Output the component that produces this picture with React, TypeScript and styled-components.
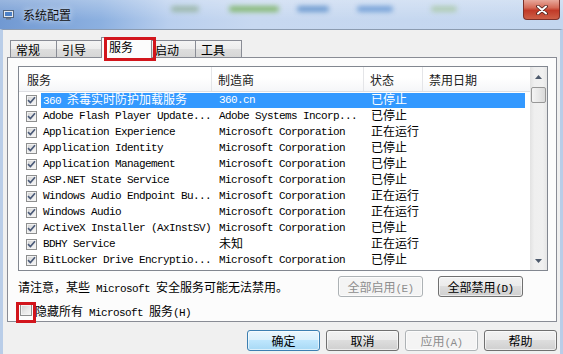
import React from 'react'
import styled, { createGlobalStyle } from 'styled-components'

const MONO = `"Liberation Mono", "Noto Sans CJK SC", monospace`
const HAN = `"Noto Sans CJK SC", "Noto Sans", sans-serif`

const GlobalStyle = createGlobalStyle`
  html, body {
    margin: 0;
    padding: 0;
    background: #f0f0f0;
  }
  body {
    width: 563px;
    height: 354px;
    overflow: hidden;
    font-family: ${HAN};
  }
`

const Window = styled.div`
  width: 563px;
  height: 354px;
  display: flex;
  flex-direction: column;
  overflow: hidden;
`

const TitleBar = styled.div`
  height: 29px;
  flex: none;
  display: flex;
  align-items: center;
  padding-left: 3px;
  box-sizing: border-box;
  background:
    linear-gradient(180deg, rgba(255, 255, 255, 0.28) 0%, rgba(255, 255, 255, 0) 70%),
    linear-gradient(90deg, #7199d2 0%, #8cb0e0 18%, #b9cfee 30%, #c7d8f0 45%, #c3d6ef 100%);
`

const TitleIcon = styled.svg`
  flex: none;
  margin-right: 9px;
`

const TitleText = styled.span`
  font: 12px ${HAN};
  color: #111;
  text-shadow: 0 0 6px rgba(255, 255, 255, 0.9);
`

const Blobs = styled.div`
  display: flex;
  align-self: flex-start;
  margin-top: 6px;
  margin-left: 100px;
`

const Blob = styled.span<{ $w: number; $color: string; $ml: number }>`
  width: ${(p) => p.$w}px;
  height: 6px;
  margin-left: ${(p) => p.$ml}px;
  border-radius: 3px;
  background: ${(p) => p.$color};
  filter: blur(2.5px);
  opacity: 0.75;
`

const CloseButton = styled.div`
  margin-left: auto;
  margin-right: 3px;
  align-self: flex-start;
  width: 37px;
  height: 20px;
  box-sizing: border-box;
  display: flex;
  align-items: center;
  justify-content: center;
  border: 1px solid #7d3029;
  border-top: none;
  border-radius: 0 0 4px 4px;
  background: linear-gradient(180deg, #e8a89b 0%, #d56b58 40%, #c13a28 55%, #cd5f47 100%);
`

const Body = styled.div`
  flex: 1;
  display: flex;
  flex-direction: column;
  background: #f0f0f0;
  border-top: 1px solid #8b9bb0;
  border-left: 3px solid #b9cde8;
  border-right: 3px solid #b9cde8;
`

const TabStrip = styled.div`
  display: flex;
  align-items: flex-end;
  height: 20px;
  padding: 8px 0 0 7px;
  margin-bottom: -1px;
  position: relative;
  z-index: 1;
`

const Tab = styled.div<{ $active?: boolean }>`
  position: relative;
  box-sizing: border-box;
  width: ${(p) => (p.$active ? 51 : 47)}px;
  height: ${(p) => (p.$active ? 21 : 18)}px;
  margin: 0 ${(p) => (p.$active ? -2 : 0)}px 0 ${(p) => (p.$active ? -2 : -1)}px;
  padding-left: ${(p) => (p.$active ? 7 : 5)}px;
  z-index: ${(p) => (p.$active ? 2 : 0)};
  border: 1px solid #898c95;
  border-bottom: ${(p) => (p.$active ? 'none' : '1px solid #898c95')};
  background: ${(p) =>
    p.$active ? '#fcfcfc' : 'linear-gradient(180deg, #f4f4f4 0%, #ececec 50%, #dedede 51%, #d6d6d6 100%)'};
  font: 12px/17px ${HAN};
  color: #000;
  &:first-child {
    margin-left: 0;
  }
`

const RedMark = styled.span<{ $t: number; $l: number; $r: number; $b: number }>`
  position: absolute;
  top: ${(p) => p.$t}px;
  left: ${(p) => p.$l}px;
  right: ${(p) => p.$r}px;
  bottom: ${(p) => p.$b}px;
  border: 3px solid #d2151c;
  pointer-events: none;
  z-index: 3;
`

const Panel = styled.div`
  height: 265px;
  margin: 0 3px 0 4px;
  box-sizing: border-box;
  border: 1px solid #898c95;
  background: #fcfcfc;
  padding: 8px 8px 0 10px;
  display: flex;
  flex-direction: column;
`

const List = styled.div`
  height: 205px;
  flex: none;
  box-sizing: border-box;
  border: 1px solid #828790;
  background: #fff;
  display: flex;
  overflow: hidden;
`

const ListMain = styled.div`
  flex: 1;
  display: flex;
  flex-direction: column;
  overflow: hidden;
`

const HeaderRow = styled.div`
  display: flex;
  height: 25px;
  flex: none;
  box-sizing: border-box;
  border-bottom: 1px solid #dedfe3;
  background: linear-gradient(180deg, #ffffff 0%, #ffffff 45%, #f5f6f8 100%);
`

const HeaderCell = styled.div<{ $w: number; $pl: number }>`
  width: ${(p) => p.$w}px;
  flex: none;
  box-sizing: border-box;
  padding-left: ${(p) => p.$pl}px;
  border-right: 1px solid #e4e5e8;
  font: 12px/25px ${HAN};
  color: #1a1a1a;
  &:last-child {
    border-right: none;
  }
`

const Row = styled.div`
  display: flex;
  height: 16px;
  flex: none;
  align-items: center;
  font: 11px/16px ${MONO};
  letter-spacing: -0.6px;
  color: #000;
  white-space: nowrap;
`

const CheckCell = styled.div`
  width: 22px;
  flex: none;
  display: flex;
  padding-left: 7px;
  box-sizing: border-box;
`

const RowBody = styled.div<{ $selected?: boolean }>`
  display: flex;
  width: 484px;
  height: 15px;
  align-items: center;
  background: ${(p) => (p.$selected ? '#3399ff' : 'transparent')};
  color: ${(p) => (p.$selected ? '#fff' : '#000')};
`

const Cell = styled.div<{ $w: number; $pl: number }>`
  width: ${(p) => p.$w}px;
  flex: none;
  box-sizing: border-box;
  padding-left: ${(p) => p.$pl}px;
  overflow: hidden;
`

const Han = styled.span`
  font-family: ${HAN};
  font-size: 12px;
  letter-spacing: 0;
`

const CheckBox = styled.span<{ $size?: number }>`
  width: ${(p) => p.$size ?? 12}px;
  height: ${(p) => p.$size ?? 12}px;
  flex: none;
  box-sizing: border-box;
  display: inline-flex;
  align-items: center;
  justify-content: center;
  border: 1px solid #8e8f8f;
  background: linear-gradient(135deg, #cfcfcf 0%, #e9e9e9 55%, #f7f7f7 100%);
  box-shadow: inset 0 0 0 1px #f2f2f2;
`

const ScrollBar = styled.div`
  width: 17px;
  flex: none;
  display: flex;
  flex-direction: column;
  align-items: center;
  background: linear-gradient(90deg, #e2e2e2 0%, #efefef 25%, #f0f0f0 75%, #e6e6e6 100%);
`

const ScrollArrow = styled.div`
  height: 19px;
  width: 100%;
  flex: none;
  display: flex;
  align-items: center;
  justify-content: center;
`

const ScrollThumb = styled.div`
  width: 15px;
  height: 16px;
  box-sizing: border-box;
  margin-top: 1px;
  border: 1px solid #979797;
  border-radius: 2px;
  background: linear-gradient(90deg, #f4f4f4 0%, #e8e8e8 50%, #d9d9d9 100%);
`

const ScrollSpace = styled.div`
  flex: 1;
`

const NoteRow = styled.div`
  display: flex;
  align-items: center;
  height: 21px;
  margin-top: 5px;
  padding-right: 25px;
  font: 11px ${MONO};
  letter-spacing: -0.6px;
  color: #000;
`

const NoteText = styled.span`
  flex: 1;
  white-space: nowrap;
`

const Button = styled.button<{ $w: number; $kind?: 'default' | 'disabled' }>`
  width: ${(p) => p.$w}px;
  height: 21px;
  padding: 0;
  margin: 0;
  box-sizing: border-box;
  border-radius: 3px;
  border: 1px solid ${(p) => (p.$kind === 'default' ? '#3c7fb1' : p.$kind === 'disabled' ? '#adb2b5' : '#707070')};
  background: ${(p) =>
    p.$kind === 'default'
      ? 'linear-gradient(180deg, #eaf6fd 0%, #d9f0fc 49%, #bee6fd 50%, #a7d9f5 100%)'
      : p.$kind === 'disabled'
        ? '#f4f4f4'
        : 'linear-gradient(180deg, #f2f2f2 0%, #ebebeb 49%, #dddddd 50%, #cfcfcf 100%)'};
  box-shadow: inset 0 0 0 1px rgba(255, 255, 255, 0.6);
  color: ${(p) => (p.$kind === 'disabled' ? '#8d8d8d' : '#000')};
  font: 11px/19px ${MONO};
  letter-spacing: -0.6px;
  white-space: nowrap;
  text-align: center;
`

const ButtonGroup = styled.div`
  display: flex;
  gap: 15px;
`

const CheckRow = styled.div`
  display: flex;
  align-items: center;
  height: 12px;
  margin-top: 7px;
  padding-left: 2px;
  font: 11px ${MONO};
  letter-spacing: -0.6px;
  color: #000;
  white-space: nowrap;
`

const CheckLabel = styled.span`
  white-space: pre;
`

const CheckWrap = styled.span`
  position: relative;
  display: inline-flex;
  margin-right: 3px;
`

const Footer = styled.div`
  display: flex;
  justify-content: flex-end;
  gap: 6px;
  padding: 8px 3px 0 0;
`

const CJK = /([\u3000-\u303f\u4e00-\u9fff\uff00-\uffef]+)/

const Mixed = ({ text }: { text: string }) => (
  <>
    {text.split(CJK).map((part, i) => (i % 2 ? <Han key={i}>{part}</Han> : part))}
  </>
)

const Tick = () => (
  <svg width="9" height="8" viewBox="0 0 9 8">
    <path d="M1 4.2 L3.4 6.5 L8 1.2" fill="none" stroke="#4a5a78" strokeWidth="1.7" />
  </svg>
)

const columns = [
  { label: '服务', w: 193, pl: 8 },
  { label: '制造商', w: 152, pl: 6 },
  { label: '状态', w: 59, pl: 6 },
  { label: '禁用日期', w: 106, pl: 6 },
]

const services: [string, string, string][] = [
  ['360 杀毒实时防护加载服务', '360.cn', '已停止'],
  ['Adobe Flash Player Update...', 'Adobe Systems Incorp...', '已停止'],
  ['Application Experience', 'Microsoft Corporation', '正在运行'],
  ['Application Identity', 'Microsoft Corporation', '已停止'],
  ['Application Management', 'Microsoft Corporation', '已停止'],
  ['ASP.NET State Service', 'Microsoft Corporation', '已停止'],
  ['Windows Audio Endpoint Bu...', 'Microsoft Corporation', '正在运行'],
  ['Windows Audio', 'Microsoft Corporation', '正在运行'],
  ['ActiveX Installer (AxInstSV)', 'Microsoft Corporation', '已停止'],
  ['BDHY Service', '未知', '正在运行'],
  ['BitLocker Drive Encryptio...', 'Microsoft Corporation', '已停止'],
]

const tabs = ['常规', '引导', '服务', '启动', '工具']

export default function App() {
  return (
    <Window>
      <GlobalStyle />
      <TitleBar>
        <TitleIcon width="11" height="10" viewBox="0 0 11 10">
          <rect x="0.5" y="0.5" width="10" height="7" fill="#e4e9ef" stroke="#56667c" />
          <rect x="2" y="2" width="7" height="4" fill="#4c80c6" />
          <rect x="3" y="8" width="5" height="1.5" fill="#6b798c" />
        </TitleIcon>
        <TitleText>系统配置</TitleText>
        <Blobs>
          <Blob $w={28} $ml={0} $color="#8fae95" />
          <Blob $w={50} $ml={30} $color="#6fae4c" />
          <Blob $w={32} $ml={18} $color="#4f86c6" />
          <Blob $w={36} $ml={28} $color="#5a8fd0" />
          <Blob $w={26} $ml={38} $color="#a6c7a0" />
        </Blobs>
        <CloseButton>
          <svg width="12" height="10" viewBox="0 0 12 10">
            <path d="M2 1.5 L10 8.5 M10 1.5 L2 8.5" stroke="#4a1d18" strokeWidth="3.6" strokeLinecap="round" />
            <path d="M2 1.5 L10 8.5 M10 1.5 L2 8.5" stroke="#fff" strokeWidth="2" strokeLinecap="round" />
          </svg>
        </CloseButton>
      </TitleBar>

      <Body>
        <TabStrip>
          {tabs.map((t) => (
            <Tab key={t} $active={t === '服务'}>
              {t}
              {t === '服务' && <RedMark $t={-1} $l={2} $r={-5} $b={-3} />}
            </Tab>
          ))}
        </TabStrip>

        <Panel>
          <List>
            <ListMain>
              <HeaderRow>
                {columns.map((c) => (
                  <HeaderCell key={c.label} $w={c.w} $pl={c.pl}>
                    {c.label}
                  </HeaderCell>
                ))}
              </HeaderRow>
              {services.map(([name, maker, state], i) => (
                <Row key={name}>
                  <CheckCell>
                    <CheckBox $size={11}>
                      <Tick />
                    </CheckBox>
                  </CheckCell>
                  <RowBody $selected={i === 0}>
                    <Cell $w={171} $pl={2}>
                      <Mixed text={name} />
                    </Cell>
                    <Cell $w={152} $pl={7}>
                      <Mixed text={maker} />
                    </Cell>
                    <Cell $w={59} $pl={7}>
                      <Mixed text={state} />
                    </Cell>
                  </RowBody>
                </Row>
              ))}
            </ListMain>
            <ScrollBar>
              <ScrollArrow>
                <svg width="7" height="4" viewBox="0 0 7 4">
                  <path d="M0 4 L3.5 0 L7 4 Z" fill="#4d5a6c" />
                </svg>
              </ScrollArrow>
              <ScrollThumb />
              <ScrollSpace />
              <ScrollArrow>
                <svg width="7" height="4" viewBox="0 0 7 4">
                  <path d="M0 0 L3.5 4 L7 0 Z" fill="#4d5a6c" />
                </svg>
              </ScrollArrow>
            </ScrollBar>
          </List>

          <NoteRow>
            <NoteText>
              <Mixed text="请注意，某些 Microsoft 安全服务可能无法禁用。" />
            </NoteText>
            <ButtonGroup>
              <Button $w={85} $kind="disabled">
                <Mixed text="全部启用(E)" />
              </Button>
              <Button $w={85}>
                <Mixed text="全部禁用(D)" />
              </Button>
            </ButtonGroup>
          </NoteRow>

          <CheckRow>
            <CheckWrap>
              <CheckBox />
              <RedMark $t={-2} $l={-4} $r={-4} $b={-7} />
            </CheckWrap>
            <CheckLabel>
              <Mixed text="隐藏所有 Microsoft 服务(H)" />
            </CheckLabel>
          </CheckRow>
        </Panel>

        <Footer>
          <Button $w={73} $kind="default">
            <Mixed text="确定" />
          </Button>
          <Button $w={73}>
            <Mixed text="取消" />
          </Button>
          <Button $w={73} $kind="disabled">
            <Mixed text="应用(A)" />
          </Button>
          <Button $w={73}>
            <Mixed text="帮助" />
          </Button>
        </Footer>
      </Body>
    </Window>
  )
}
